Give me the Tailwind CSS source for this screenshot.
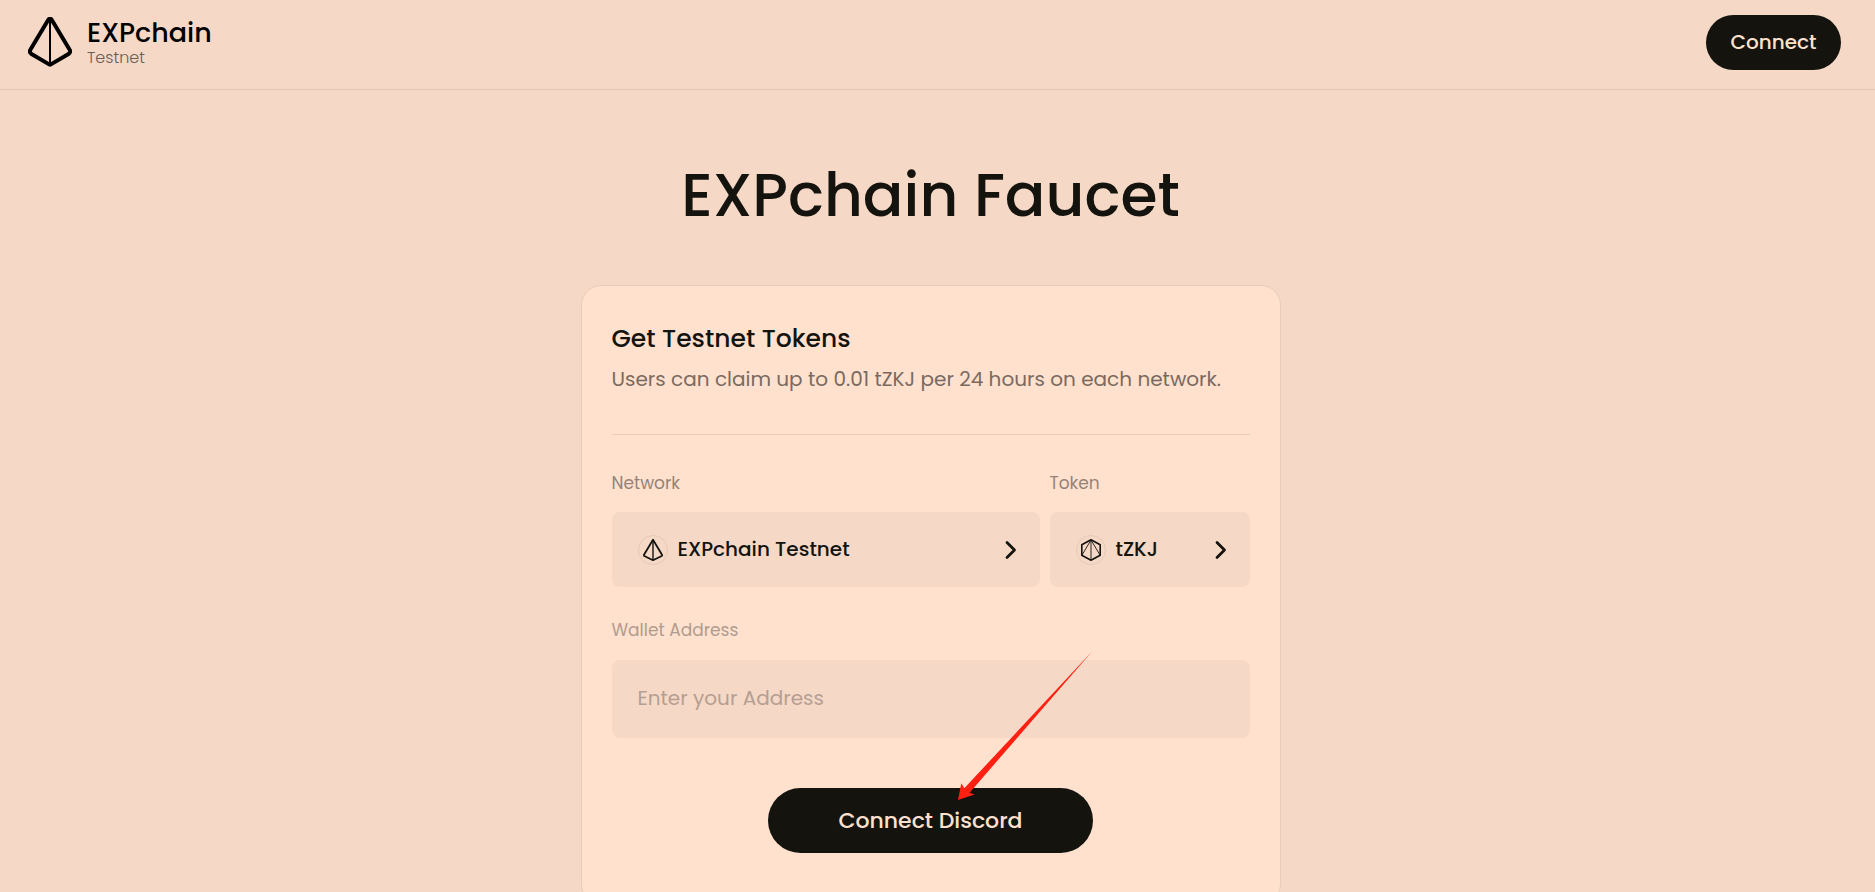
<!DOCTYPE html>
<html lang="en">
<head>
<meta charset="utf-8">
<meta name="viewport" content="width=device-width, initial-scale=1">
<title>EXPchain Faucet</title>
<script src="https://cdn.jsdelivr.net/npm/@tailwindcss/browser@4"></script>
</head>
<body class="min-h-screen bg-[#f5d8c6] font-['Poppins','Inter',sans-serif] text-[#14130e]">
  <header class="flex h-[90px] items-center justify-between border-b border-[#e3c5b5] pr-[34px] pb-1 pl-7">
    <a href="#" class="flex items-center gap-[15px] pb-[2px]">
      <svg class="h-[50px] w-11" viewBox="0 0 44 50" fill="none" stroke="#000" aria-hidden="true">
        <path d="M20.300 2.700Q22 0.700 23.700 2.700L41.500 32.500Q43.300 35.300 40.500 37L23.700 46.900Q22 48.500 20.300 46.900L3.500 37Q0.700 35.300 2.500 32.500Z" stroke-width="4" stroke-linejoin="round"/>
        <path d="M22 2V48" stroke-width="2"/>
      </svg>
      <span class="flex flex-col">
        <span class="text-[27px] leading-8 font-medium text-black">EXPchain</span>
        <span class="text-base leading-[18px] font-light text-[#6b5d55]">Testnet</span>
      </span>
    </a>
    <button type="button" class="h-[55px] w-[135px] rounded-full bg-[#14130e] pb-[2px] text-xl font-medium text-[#ffe1ce]">Connect</button>
  </header>

  <main class="flex flex-col items-center pt-[65px] pr-[14px]">
    <h1 class="text-[60px] leading-[80px] font-medium">EXPchain Faucet</h1>
    <section class="mt-[50px] w-full max-w-[700px] rounded-[20px] border border-[#eaccb9] bg-[#ffe1ce] px-[30px] pt-[37px] pb-[50px]">
      <h2 class="text-[25px] leading-8 font-medium">Get Testnet Tokens</h2>
      <p class="mt-2 text-xl leading-8 text-[#796a61]">Users can claim up to 0.01 tZKJ per 24 hours on each network.</p>
      <hr class="mt-[39px] border-[#eaccb9]">

      <div class="mt-[34px] flex gap-[10px]">
        <div class="min-w-0 flex-1">
          <label for="network" class="block text-[17px] leading-7 text-[#958377]">Network</label>
          <button id="network" type="button" class="mt-[15px] flex h-[75px] w-full items-center rounded-lg bg-[#f5d8c6] pr-[23px] pl-[26px] text-xl font-medium">
            <svg class="size-[30px]" viewBox="0 0 30 30" fill="none" stroke="#14130e" aria-hidden="true">
              <circle cx="15" cy="15" r="14.500" stroke="#e5c9b9"/>
              <path d="M15 4.700L24 19.800Q24.400 20.600 23.700 21L15 25.200L6.300 21Q5.600 20.600 6 19.800Z" stroke-width="1.800" stroke-linejoin="round"/>
              <path d="M15 5V25" stroke-width="1.400"/>
            </svg>
            <span class="ml-[10px] pb-[2px]">EXPchain Testnet</span>
            <svg class="ml-auto h-5 w-3" viewBox="0 0 12 20" fill="none" stroke="#14130e" stroke-width="2.800" stroke-linecap="round" stroke-linejoin="round" aria-hidden="true"><path d="M2 2.500L9.500 10L2 17.500"/></svg>
          </button>
        </div>
        <div class="w-[200px]">
          <label for="token" class="block text-[17px] leading-7 text-[#958377]">Token</label>
          <button id="token" type="button" class="mt-[15px] flex h-[75px] w-full items-center rounded-lg bg-[#f5d8c6] pr-[23px] pl-[26px] text-xl font-medium">
            <svg class="size-[30px]" viewBox="0 0 30 30" fill="none" stroke="#14130e" aria-hidden="true">
              <circle cx="15" cy="15" r="14.500" stroke="#e5c9b9"/>
              <path d="M15 4.700L24.200 9.800V20.200L15 25.200L5.800 20.200V9.800Z" stroke-width="1.600" stroke-linejoin="round"/>
              <path d="M15 5L6 20M15 5L24 20M15 5V25" stroke-width="0.900"/>
            </svg>
            <span class="ml-[10px] pb-[2px]">tZKJ</span>
            <svg class="ml-auto h-5 w-3" viewBox="0 0 12 20" fill="none" stroke="#14130e" stroke-width="2.800" stroke-linecap="round" stroke-linejoin="round" aria-hidden="true"><path d="M2 2.500L9.500 10L2 17.500"/></svg>
          </button>
        </div>
      </div>

      <label for="address" class="mt-[29px] block text-[17px] leading-7 text-[#b09c8e]">Wallet Address</label>
      <input id="address" type="text" placeholder="Enter your Address" class="mt-4 block h-[78px] w-full rounded-lg bg-[#f5d8c6] px-[26px] pb-[2px] text-xl placeholder:text-[#b59f92]">

      <div class="relative mx-auto mt-[50px] w-[325px]">
        <button type="button" class="h-[65px] w-full rounded-full bg-[#14130e] text-[22px] font-medium text-[#ffe1ce]">Connect Discord</button>
        <svg class="pointer-events-none absolute -top-[138px] left-[188px] h-[152px] w-[137px]" viewBox="0 0 137 152" fill="#ff2012" aria-hidden="true">
          <path d="M136.500 1L13.600 142.700L18.500 144.400L2 150L5.300 133.300L8.300 138.200Z"/>
        </svg>
      </div>
    </section>
  </main>
</body>
</html>
